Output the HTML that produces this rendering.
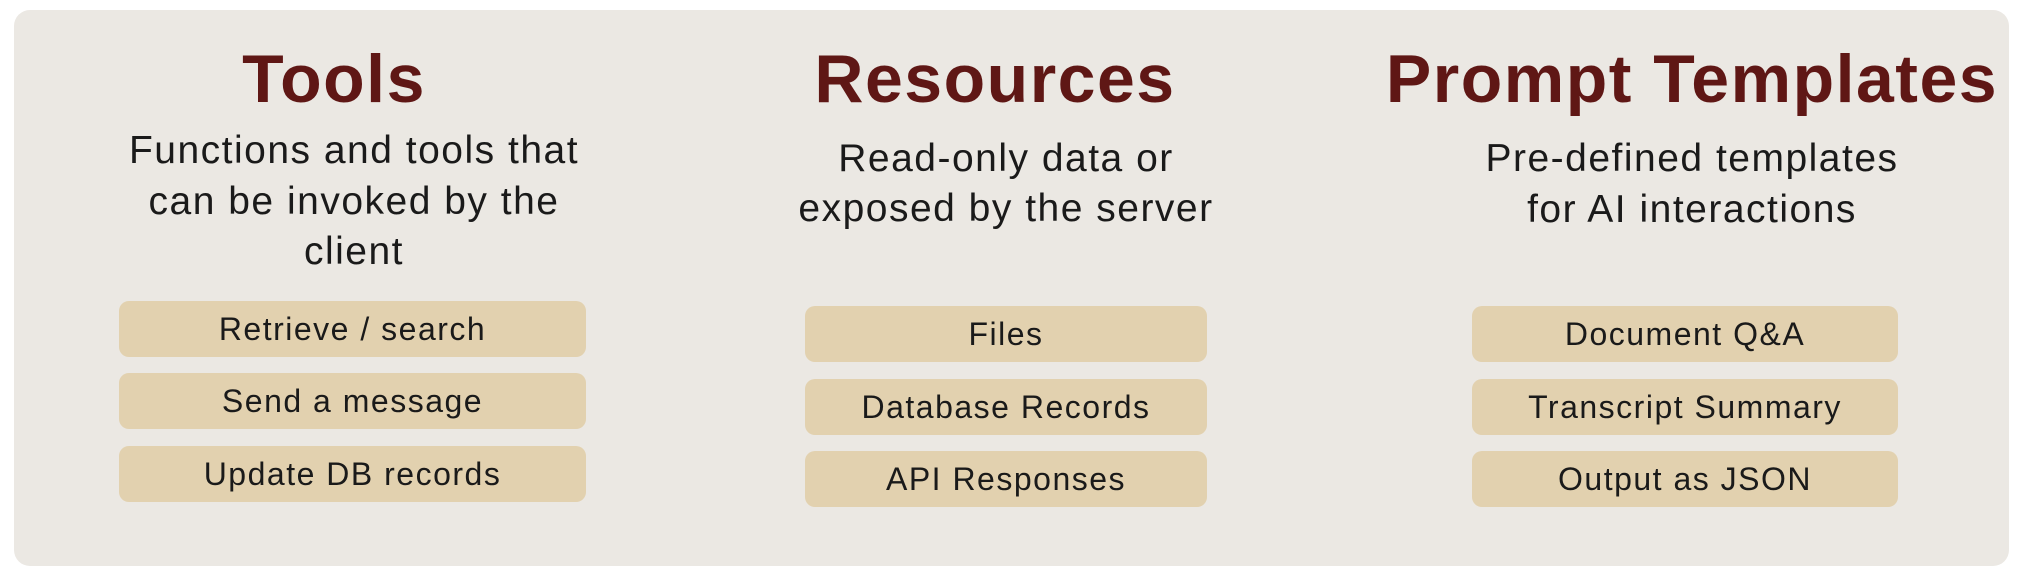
<!DOCTYPE html>
<html><head><meta charset="utf-8"><style>
html,body{margin:0;padding:0;width:2030px;height:576px;background:#fff;overflow:hidden}
.panel{position:absolute;left:14px;top:10px;width:1995px;height:556px;background:#ebe8e3;border-radius:16px}
.t{position:absolute;font-family:"Liberation Sans",sans-serif;white-space:nowrap;transform:translateX(-50%)}
.title{font-weight:bold;font-size:68px;color:#5f1715;letter-spacing:1.5px;line-height:1}
.d{font-size:39px;color:#1a1a1a;letter-spacing:1.5px;line-height:1}
.pill{position:absolute;background:#e2d1af;border-radius:10px;height:56px;font-family:"Liberation Sans",sans-serif;font-size:32px;letter-spacing:1.5px;color:#1a1a1a;display:flex;align-items:center;justify-content:center}
</style></head><body>
<div class="panel"></div>
<div class="t title" style="left:334px;top:45px">Tools</div>
<div class="t title" style="left:995px;top:45px">Resources</div>
<div class="t title" style="left:1692px;top:45px">Prompt Templates</div>

<div class="t d" style="left:354px;top:131px">Functions and tools that</div>
<div class="t d" style="left:354px;top:182px">can be invoked by the</div>
<div class="t d" style="left:354px;top:232px">client</div>

<div class="t d" style="left:1006px;top:139px">Read-only data or</div>
<div class="t d" style="left:1006px;top:189px">exposed by the server</div>

<div class="t d" style="left:1692px;top:139px">Pre-defined templates</div>
<div class="t d" style="left:1692px;top:190px">for AI interactions</div>

<div class="pill" style="left:119px;top:301px;width:467px">Retrieve / search</div>
<div class="pill" style="left:119px;top:373px;width:467px">Send a message</div>
<div class="pill" style="left:119px;top:446px;width:467px">Update DB records</div>

<div class="pill" style="left:805px;top:306px;width:402px">Files</div>
<div class="pill" style="left:805px;top:379px;width:402px">Database Records</div>
<div class="pill" style="left:805px;top:451px;width:402px">API Responses</div>

<div class="pill" style="left:1472px;top:306px;width:426px">Document Q&amp;A</div>
<div class="pill" style="left:1472px;top:379px;width:426px">Transcript Summary</div>
<div class="pill" style="left:1472px;top:451px;width:426px">Output as JSON</div>
</body></html>
